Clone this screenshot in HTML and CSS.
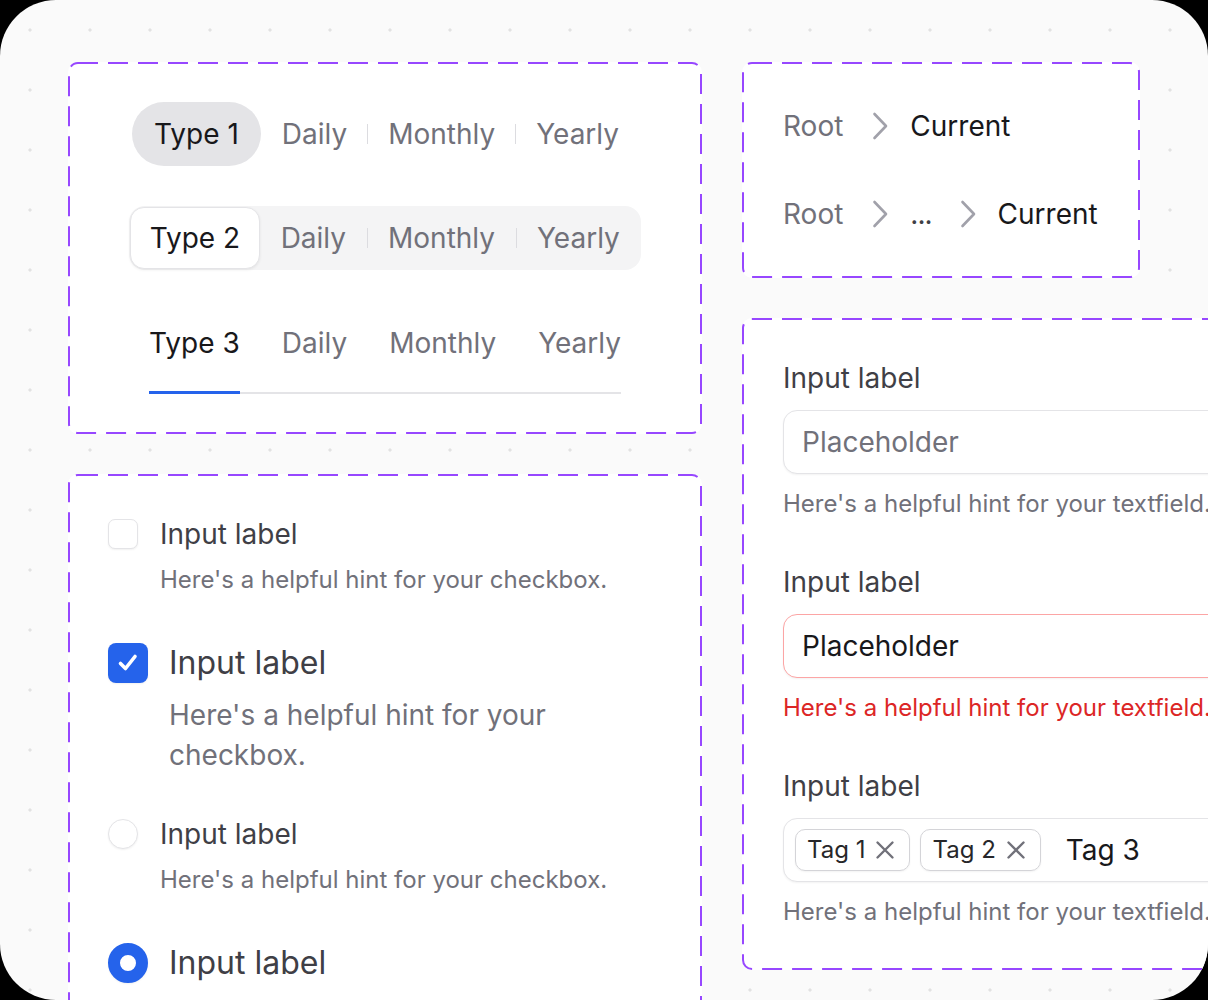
FILE: index.html
```html
<!DOCTYPE html>
<html lang="en">
<head>
<meta charset="utf-8">
<title>Components</title>
<link rel="stylesheet" href="styles.css">
</head>
<body>
<div class="canvas">
  <div class="col col-left">
    <section class="card card-tabs">
      <svg class="dash" aria-hidden="true"><rect width="100%" height="100%" rx="9" ry="9"/></svg>
      <div class="seg seg-pill">
        <span class="seg-item active">Type 1</span>
        <span class="seg-item">Daily</span>
        <span class="seg-div"></span>
        <span class="seg-item">Monthly</span>
        <span class="seg-div"></span>
        <span class="seg-item">Yearly</span>
      </div>
      <div class="seg seg-box">
        <span class="seg-item active">Type 2</span>
        <span class="seg-item">Daily</span>
        <span class="seg-div"></span>
        <span class="seg-item">Monthly</span>
        <span class="seg-div"></span>
        <span class="seg-item">Yearly</span>
      </div>
      <div class="seg seg-line">
        <span class="seg-item active">Type 3</span>
        <span class="seg-item">Daily</span>
        <span class="seg-item">Monthly</span>
        <span class="seg-item">Yearly</span>
      </div>
    </section>

    <section class="card card-checks">
      <svg class="dash" aria-hidden="true"><rect width="100%" height="100%" rx="9" ry="9"/></svg>
      <div class="choice">
        <span class="ctrl box"></span>
        <div class="choice-text">
          <div class="choice-label">Input label</div>
          <div class="choice-hint">Here's a helpful hint for your checkbox.</div>
        </div>
      </div>
      <div class="choice choice-lg">
        <span class="ctrl box checked">
          <svg viewBox="0 0 40 40" width="40" height="40"><path d="M12.5 20.5 L17.5 25.5 L27 13.5"/></svg>
        </span>
        <div class="choice-text">
          <div class="choice-label">Input label</div>
          <div class="choice-hint">Here's a helpful hint for your checkbox.</div>
        </div>
      </div>
      <div class="choice">
        <span class="ctrl radio"></span>
        <div class="choice-text">
          <div class="choice-label">Input label</div>
          <div class="choice-hint">Here's a helpful hint for your checkbox.</div>
        </div>
      </div>
      <div class="choice choice-lg">
        <span class="ctrl radio checked"></span>
        <div class="choice-text">
          <div class="choice-label">Input label</div>
          <div class="choice-hint">Here's a helpful hint for your checkbox.</div>
        </div>
      </div>
    </section>
  </div>

  <div class="col col-right">
    <section class="card card-crumbs">
      <svg class="dash" aria-hidden="true"><rect width="100%" height="100%" rx="9" ry="9"/></svg>
      <nav class="crumbs">
        <span class="crumb">Root</span>
        <svg class="chev" viewBox="0 0 16 28" width="16" height="28"><path d="M2.5 2 L14 14 L2.5 26"/></svg>
        <span class="crumb current">Current</span>
      </nav>
      <nav class="crumbs">
        <span class="crumb">Root</span>
        <svg class="chev" viewBox="0 0 16 28" width="16" height="28"><path d="M2.5 2 L14 14 L2.5 26"/></svg>
        <span class="crumb ellipsis">...</span>
        <svg class="chev" viewBox="0 0 16 28" width="16" height="28"><path d="M2.5 2 L14 14 L2.5 26"/></svg>
        <span class="crumb current">Current</span>
      </nav>
    </section>

    <section class="card card-fields">
      <svg class="dash" aria-hidden="true"><rect width="100%" height="100%" rx="9" ry="9"/></svg>
      <div class="field">
        <label class="field-label">Input label</label>
        <div class="field-input"><span class="placeholder">Placeholder</span></div>
        <div class="field-hint">Here's a helpful hint for your textfield.</div>
      </div>
      <div class="field field-error">
        <label class="field-label">Input label</label>
        <div class="field-input"><span class="value">Placeholder</span></div>
        <div class="field-hint">Here's a helpful hint for your textfield.</div>
      </div>
      <div class="field">
        <label class="field-label">Input label</label>
        <div class="field-input tags">
          <span class="tag">Tag 1<svg viewBox="0 0 20 20" width="20" height="20"><path d="M2.5 2.5 L17.5 17.5 M17.5 2.5 L2.5 17.5"/></svg></span>
          <span class="tag">Tag 2<svg viewBox="0 0 20 20" width="20" height="20"><path d="M2.5 2.5 L17.5 17.5 M17.5 2.5 L2.5 17.5"/></svg></span>
          <span class="value tag-typed">Tag 3</span>
        </div>
        <div class="field-hint">Here's a helpful hint for your textfield.</div>
      </div>
    </section>
  </div>
</div>
</body>
</html>
```

FILE: styles.css
```css
* { box-sizing: border-box; }

html, body {
  margin: 0;
  padding: 0;
  background: #000;
}

body {
  font-family: "Inter", "Noto Sans", "Liberation Sans", sans-serif;
  color: #18181b;
}

.canvas {
  width: 1208px;
  height: 1000px;
  border-radius: 56px;
  overflow: hidden;
  background-color: #fafafa;
  background-image: radial-gradient(circle at 30px 30px, #e2e2e2 1.3px, rgba(226,226,226,0) 1.9px);
  background-size: 60px 60px;
  padding: 62px 0 0 68px;
  display: flex;
  align-items: flex-start;
  gap: 40px;
}

.col {
  display: flex;
  flex-direction: column;
  gap: 40px;
  flex-shrink: 0;
}

.col-left { width: 634px; }
.col-right { width: 560px; align-items: flex-start; }

.card {
  position: relative;
  background: #fff;
  border-radius: 10px;
}

.dash {
  position: absolute;
  left: 1px;
  top: 1px;
  width: calc(100% - 2px);
  height: calc(100% - 2px);
  overflow: visible;
  pointer-events: none;
}

.dash rect {
  fill: none;
  stroke: #9747ff;
  stroke-width: 2;
  stroke-dasharray: 20 10;
}

/* ---------- Tabs ---------- */
.card-tabs {
  width: 634px;
  height: 372px;
  padding: 40px 0;
  display: flex;
  flex-direction: column;
  align-items: center;
  gap: 40px;
}

.seg {
  display: flex;
  align-items: center;
  font-size: 28px;
  line-height: 34px;
  color: #71717a;
}

.seg-item { white-space: nowrap; }
.seg-item.active { color: #18181b; }

.seg-div {
  width: 1px;
  height: 20px;
  background: #dcdce0;
}

.seg-pill { margin-left: 1px; }

.seg-pill .seg-item {
  height: 64px;
  line-height: 64px;
  padding: 0 20px;
}

.seg-pill .seg-item.active {
  background: #e4e4e7;
  border-radius: 32px;
  padding: 0 22px;
  margin-right: 1px;
}

.seg-box {
  background: #f4f4f5;
  border-radius: 16px;
  padding: 1px;
  height: 64px;
}

.seg-box .seg-item {
  height: 62px;
  line-height: 62px;
  padding: 0 20.5px;
}

.seg-box .seg-item.active {
  background: #fff;
  border: 1px solid #e4e4e7;
  border-radius: 14px;
  line-height: 60px;
  padding: 0 19px;
  box-shadow: 0 1px 3px rgba(0,0,0,0.07);
}

.seg-line {
  gap: 42px;
  border-bottom: 2px solid #e4e4e7;
  align-items: stretch;
}

.seg-line .seg-item {
  padding: 16px 0 31px;
  border-bottom: 3px solid transparent;
  margin-bottom: -2px;
}

.seg-line .seg-item.active {
  border-bottom-color: #2563eb;
}

/* ---------- Checkboxes / radios ---------- */
.card-checks {
  width: 634px;
  padding: 42px 40px 40px;
  display: flex;
  flex-direction: column;
  gap: 43px;
}

.choice {
  display: flex;
  align-items: flex-start;
  gap: 22px;
}

.choice-label {
  font-size: 28px;
  line-height: 36px;
  color: #3f3f46;
}

.choice-hint {
  margin-top: 10px;
  font-size: 24px;
  line-height: 36px;
  color: #71717a;
}

.choice-lg {
  gap: 21px;
  padding-top: 2px;
  margin-bottom: -2px;
}

.choice-lg .choice-label {
  font-size: 32px;
  line-height: 40px;
}

.choice-lg .choice-hint {
  margin-top: 12px;
  font-size: 28px;
  line-height: 40px;
  max-width: 400px;
}

.ctrl {
  flex-shrink: 0;
  width: 30px;
  height: 30px;
  margin-top: 3px;
  background: #fff;
  border: 1px solid #e4e4e7;
  box-shadow: 0 1px 2px rgba(0,0,0,0.06);
}

.ctrl.box { border-radius: 7px; }
.ctrl.radio { border-radius: 50%; }

.ctrl.checked {
  width: 40px;
  height: 40px;
  margin-top: 0;
  border: none;
  background: #2563eb;
}

.ctrl.box.checked { border-radius: 8px; }

.ctrl.box.checked svg { display: block; }

.ctrl.box.checked path {
  fill: none;
  stroke: #fff;
  stroke-width: 3.6;
  stroke-linecap: round;
  stroke-linejoin: round;
}

.ctrl.radio.checked {
  background: #fff;
  border: 12px solid #2563eb;
}

/* ---------- Breadcrumbs ---------- */
.card-crumbs {
  width: 398px;
  padding: 47px 41px;
  display: flex;
  flex-direction: column;
  gap: 54px;
}

.crumbs {
  display: flex;
  align-items: center;
  font-size: 28px;
  line-height: 34px;
}

.crumb { color: #71717a; white-space: nowrap; }
.crumb.current { color: #18181b; }
.crumb.ellipsis { color: #3f3f46; letter-spacing: -1px; }

.chev {
  flex-shrink: 0;
  margin: 0 22px 0 29px;
}

.crumb.ellipsis + .chev { margin-left: 28px; }

.chev path {
  fill: none;
  stroke: #a1a1aa;
  stroke-width: 2.6;
  stroke-linecap: round;
  stroke-linejoin: round;
}

/* ---------- Text fields ---------- */
.card-fields {
  width: 560px;
  padding: 42px 0 42px 41px;
  display: flex;
  flex-direction: column;
  gap: 44px;
}

.field { display: flex; flex-direction: column; }

.field-label {
  font-size: 28px;
  line-height: 36px;
  color: #3f3f46;
}

.field-input {
  margin-top: 14px;
  height: 64px;
  width: 520px;
  border: 1px solid #e4e4e7;
  border-radius: 14px;
  box-shadow: 0 1px 2px rgba(0,0,0,0.05);
  padding: 0 18px;
  display: flex;
  align-items: center;
  font-size: 28px;
  line-height: 34px;
  background: #fff;
}

.placeholder { color: #71717a; }
.value { color: #18181b; }

.field-hint {
  margin-top: 14px;
  font-size: 24px;
  line-height: 32px;
  color: #71717a;
  white-space: nowrap;
}

.field-error .field-input { border-color: #fca5a5; }
.field-error .field-hint { color: #dc2626; }

.field-input.tags {
  padding: 0 11px;
  gap: 10px;
}

.tag {
  display: flex;
  align-items: center;
  gap: 10px;
  height: 42px;
  padding: 0 14px 0 11px;
  border: 1px solid #d4d4d8;
  border-radius: 10px;
  font-size: 24px;
  line-height: 30px;
  color: #27272a;
  box-shadow: 0 1px 2px rgba(0,0,0,0.05);
}

.tag svg path {
  fill: none;
  stroke: #71717a;
  stroke-width: 2.4;
  stroke-linecap: round;
}

.tag-typed { margin-left: 15px; }
```
